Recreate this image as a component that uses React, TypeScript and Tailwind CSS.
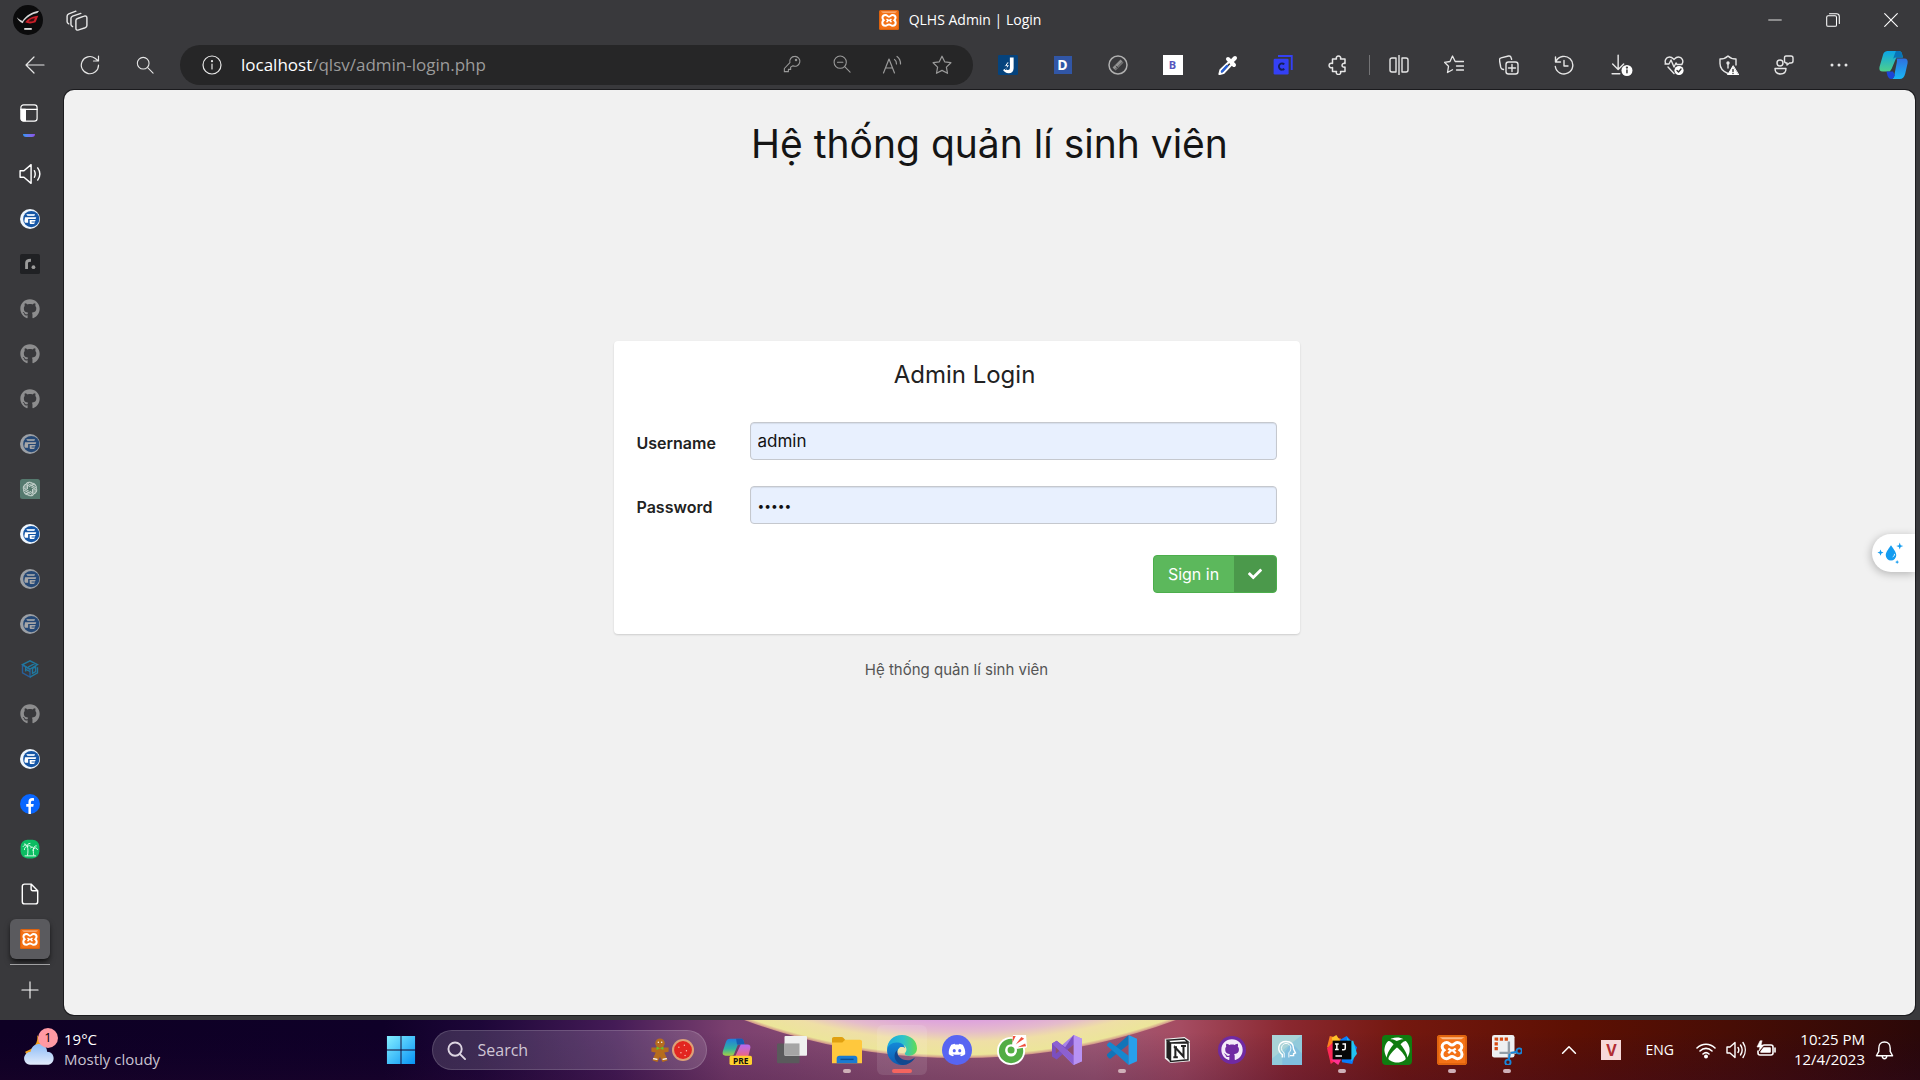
import React from 'react';
import type { ReactNode } from 'react';
import { FaGithub, FaDiscord, FaXbox, FaCheck } from 'react-icons/fa';

type IconProps = { className?: string };

function Line({ children, className = 'size-5', width = 1.2 }: { children: ReactNode; className?: string; width?: number }) {
  return (
    <svg viewBox="0 0 20 20" className={className} fill="none" stroke="currentColor" strokeWidth={width} strokeLinecap="round" strokeLinejoin="round" aria-hidden="true">
      {children}
    </svg>
  );
}

function Art({ children, className = 'size-5', box = '0 0 32 32' }: { children: ReactNode; className?: string; box?: string }) {
  return (
    <svg viewBox={box} className={className} aria-hidden="true">
      {children}
    </svg>
  );
}

function Xampp({ className = 'size-5' }: IconProps) {
  return (
    <Art className={className}>
      <rect width="32" height="32" rx="3" fill="#f47216" />
      <rect x="1" y="1" width="30" height="30" rx="2" fill="none" stroke="#d9600d" strokeWidth="1.5" />
      <path d="M3 2.5h26l-3 2H6z" fill="#fbb887" />
      <path
        d="M10.500 8c-3 0-5 2-5 4.500 0 1.700 1 2.800 2 3.700-1.200 1-2.200 2.300-2.200 4.300 0 2.700 2.200 4.700 5 4.700 2.700 0 3.200-2.200 5.700-2.200s3 2.200 5.700 2.200c2.800 0 5-2 5-4.700 0-2-1-3.300-2.200-4.300 1-.9 2-2 2-3.700C26.500 10 24.500 8 21.500 8c-2.700 0-3 2.700-5.500 2.700S13.200 8 10.500 8z"
        fill="none"
        stroke="#fff"
        strokeWidth="3.200"
      />
      <path d="M12 14.500l3 2-3 3M20 14.500l-3 2 3 3M14 16.500h4" stroke="#fff" strokeWidth="2.400" fill="none" />
    </Art>
  );
}

function Portal({ className = 'size-5' }: IconProps) {
  return (
    <Art className={className}>
      <circle cx="16" cy="16" r="16" fill="#eef5fc" />
      <circle cx="18" cy="16" r="13" fill="#1556a5" />
      <path d="M10 8h14l-1 3H12z" fill="#d5e4f5" />
      <path d="M8 13h18l-1 3H13v6h-3c-2 0-3-1-3-3z" fill="#fff" />
      <path d="M15.500 17.500H25l-1 2.500h-5.500v1.500H24L22.500 24H17c-1 0-1.500-.6-1.500-1.500z" fill="#fff" />
    </Art>
  );
}

function ChatKnot() {
  return (
    <Art>
      <path d="M4 0h24a4 4 0 0 1 4 4v28H4a4 4 0 0 1-4-4V4a4 4 0 0 1 4-4z" fill="#55796e" />
      <g fill="none" stroke="#c3d0cb" strokeWidth="1.600">
        {[0, 60, 120, 180, 240, 300].map((a) => (
          <path key={a} transform={`rotate(${a} 16 16)`} d="M12 16V9.500a4.600 4.600 0 0 1 8.300-2.400M12 11l6.500-3.700a4.600 4.600 0 0 1 6.500 3" />
        ))}
      </g>
    </Art>
  );
}

function Hexes() {
  return (
    <Art>
      <g fill="none" stroke="#20789f" strokeWidth="2.200">
        <path d="M4 10v12l12 7V17z" stroke="#285f9a" />
        <path d="M28 13v9l-12 7" />
        <path d="M28 9 16 3 4 9l12 7zM9 12v8m4-7 11-6M10 17l6 3m4-5v8l5-3v-7z" />
      </g>
    </Art>
  );
}

function Facebook() {
  return (
    <Art>
      <circle cx="16" cy="16" r="16" fill="#0866ff" />
      <path d="M13.500 32V20.500H10V16h3.500v-2.700c0-5 2.200-7 6.300-7 .8 0 2 .1 2.600.3v4h-2c-2.300 0-2.900.9-2.900 3V16h4.500l-.8 4.500h-3.700V32z" fill="#fff" />
    </Art>
  );
}

function Palms() {
  return (
    <Art>
      <rect x="1" y="1" width="30" height="30" rx="11" fill="#0cbc62" />
      <g fill="none" stroke="#e6fff1" strokeWidth="1.500" strokeLinecap="round">
        <path d="M12 26c1-5 1-9 0-14M22 26c-1-4-1-8 0-11M8 27h17" />
        <path d="M12 12c-2-3-5-3-7 0m7 0c-3 0-5 2-5 5m5-5c2-2 5-2 6 1m-6-1c-1-3 1-5 4-5m-4 5c-1-3-3-4-5-4M22 15c-1-2-3-3-5-1m5 1c-1 1-2 3-1 4m1-4c2-2 5-1 6 2m-6-2c0-3 2-4 4-4" />
      </g>
    </Art>
  );
}

function Roadmap() {
  return (
    <Art>
      <rect width="32" height="32" rx="3" fill="#202124" />
      <path d="M10.500 24V14.500c0-3 2-4.500 7-4.500" fill="none" stroke="#9b9b9b" strokeWidth="4.500" />
      <circle cx="21.500" cy="21" r="3" fill="#9b9b9b" />
    </Art>
  );
}

function Rog() {
  return (
    <Art className="size-[30px]">
      <circle cx="16" cy="16" r="16" fill="#0b0b0c" />
      <path d="M4 13c2 2 4 3 6 4 4-6 10-10 18-11-1 1-1.500 1.500-2 2.500-6 1-10 4-14.500 8.500l-1 2.500c-3-1-5.500-4-6.500-6.500z" fill="#d8d8d8" />
      <path d="M13 18.500c3.500-4.500 7.500-6.500 14-7l-3 7c-4 1.500-8 1.500-11 0z" fill="#c81f29" />
      <path d="M16.500 17.500c2-2.500 4-3.500 7-3.500l-1.500 3c-2 .8-4 .8-5.500.5z" fill="#3a0d10" />
      <path d="M12 25.500h8" stroke="#ddd" strokeWidth="2" />
    </Art>
  );
}

function ToolButton({ label, children }: { label: string; children: ReactNode }) {
  return (
    <button type="button" aria-label={label} className="flex h-10 w-[55px] shrink-0 items-center justify-center pl-0.5 text-[#e6e6e6]">
      {children}
    </button>
  );
}

function TitleBar() {
  return (
    <div className="grid h-10 grid-cols-[1fr_auto_1fr] items-center">
      <div className="flex items-center gap-[23px] pl-[13px]">
        <button type="button" aria-label="Profile"><Rog /></button>
        <button type="button" aria-label="Workspaces" className="text-[#e6e6e6]">
          <Line className="size-[22px]" width={1.3}>
            <path d="M2.500 13.500C1.500 13 1 12.500 1 11.500V6.500C1 5.500 1.500 5 2.500 4.500L9 2M6 16c-1-.5-1.500-1-1.500-2V8.500c0-1 .5-1.500 1.500-2L13.500 4" />
            <path d="M10.500 8.600 16.500 6.500c1.300-.5 2.500 0 2.500 1.500v7c0 1-.5 1.600-1.500 2l-6 2c-1.500.5-2.500 0-2.500-1.500v-7c0-1 .5-1.600 1.500-1.900z" />
          </Line>
        </button>
      </div>
      <div className="flex items-center gap-2.5 text-white">
        <Xampp />
        <span className="text-sm">QLHS Admin | Login</span>
      </div>
      <div className="flex justify-end text-white">
        <button type="button" aria-label="Minimize" className="flex h-10 w-[58px] items-center justify-center"><Line className="size-3.5"><path d="M1 10h18" /></Line></button>
        <button type="button" aria-label="Restore" className="flex h-10 w-[58px] items-center justify-center"><Line className="size-3.5" width={1.5}><rect x="1" y="4" width="14" height="15" rx="2" /><path d="M5 1h10c3 0 4 1.500 4 4v10" /></Line></button>
        <button type="button" aria-label="Close" className="flex h-10 w-[58px] items-center justify-center"><Line className="size-3.5" width={1.600}><path d="m1 1 18 18M19 1 1 19" /></Line></button>
      </div>
    </div>
  );
}

function AddressBar() {
  return (
    <div className="mr-1.5 ml-[9px] flex h-10 min-w-0 flex-1 items-center rounded-full bg-[#262627] pr-1.5">
      <button type="button" aria-label="Site information" className="ml-[22px] text-[#e6e6e6]">
        <Line><circle cx="10" cy="10" r="9" /><path d="M10 9v5" /><circle cx="10" cy="6.200" r=".5" fill="currentColor" /></Line>
      </button>
      <a href="#login" className="ml-[19px] min-w-0 flex-1 truncate text-[17px] text-[#9b9b9b]">
        <span className="text-white">localhost</span>/qlsv/admin-login.php
      </a>
      <div className="flex text-[#9a9a9a]">
        <button type="button" aria-label="Passwords" className="flex w-[50px] justify-center">
          <Line className="size-[18px]"><path d="M13 1.500a5.500 5.500 0 0 0-5.300 7L1.500 15v3.500H6V16h2.500v-2.500L11 12a5.500 5.500 0 1 0 2-10.500z" /><circle cx="14.500" cy="5.500" r=".8" /></Line>
        </button>
        <button type="button" aria-label="Zoom out" className="flex w-[50px] justify-center">
          <Line className="size-[18px]"><circle cx="8" cy="8" r="6.800" /><path d="m13 13 6 6M5 8h6" /></Line>
        </button>
        <button type="button" aria-label="Read aloud" className="flex w-[50px] justify-center">
          <Line><path d="m1.500 18 5.500-14 5.500 14M3.500 13h7M12.500 4.500c1.500 1 2 2.500 2 4.500M15 1.500c2.500 1.800 3.500 4.500 3.500 7.500" /></Line>
        </button>
        <button type="button" aria-label="Add to favorites" className="flex w-[50px] justify-center">
          <Line><path d="m10 1.200 2.700 5.600 6.200.9-4.500 4.400 1.100 6.200L10 15.400l-5.500 2.900 1.100-6.200L1.100 7.700l6.200-.9z" /></Line>
        </button>
      </div>
    </div>
  );
}

function Toolbar() {
  return (
    <div className="flex h-[50px] items-center pl-1.5">
      <ToolButton label="Back"><Line><path d="M19 10H1.500M9 2 1 10l8 8" /></Line></ToolButton>
      <ToolButton label="Refresh"><Line><path d="M18.500 10A8.600 8.600 0 1 1 15 3.200L18.200 5.800M18.500 1v5h-5" /></Line></ToolButton>
      <ToolButton label="Search"><Line className="size-[18px]"><circle cx="8" cy="8" r="6.500" /><path d="m13 13 6 6" /></Line></ToolButton>
      <AddressBar />
      <ToolButton label="J extension">
        <Art><rect width="32" height="32" rx="2" fill="#05437d" /><path d="M19 4h6v17c0 5-3 8-8 8-4 0-7-2-9-5l5-3c1 2 2 3 3 3 2 0 3-1 3-4z" fill="#fff" /><path d="m15 11-5 7h4l-2 6 7-8h-4l3-5z" fill="#fff" stroke="#05437d" strokeWidth="1.500" /></Art>
      </ToolButton>
      <ToolButton label="D extension">
        <span className="flex size-[18px] items-center justify-center bg-[#3156a6] text-sm font-bold text-white">D</span>
      </ToolButton>
      <ToolButton label="Compass extension">
        <Line className="size-5 text-[#b0b0b0]" width={1.500}><circle cx="10" cy="10" r="9" /><path d="m6 14 8-8" strokeWidth="4" strokeLinecap="butt" stroke="#929292" /><path d="m7 14.500 8-8M8 11l2 2" strokeWidth=".8" stroke="#39393b" /></Line>
      </ToolButton>
      <ToolButton label="B extension">
        <span className="flex size-5 items-center justify-center bg-white text-[11px] font-bold text-[#5555bd]">B</span>
      </ToolButton>
      <ToolButton label="Color picker">
        <Line className="size-5"><path d="m12 6-9.500 9-1 4 4-1 9-9.500" stroke="#fff" strokeWidth="2.200" /><path d="m9 11-5 5.500" stroke="#2760d5" strokeWidth="2.500" /><path d="m10 4 6 6M15 5l2-2" stroke="#fff" strokeWidth="4" /></Line>
      </ToolButton>
      <ToolButton label="C extension">
        <Art><path d="M8 1.500h22V24" fill="none" stroke="#3440f5" strokeWidth="3" /><rect x="1" y="6" width="24" height="25" rx="2" fill="#3440f5" /><path d="M18 15a5 5 0 1 0 0 7" fill="none" stroke="#15205c" strokeWidth="3" /></Art>
      </ToolButton>
      <ToolButton label="Extensions">
        <Line width={1.500}><path d="M6 4h2.500a2.200 2.200 0 1 1 4 0H17v4.500a2 2 0 1 0 0 3.500v4.500h-4.500a2.200 2.200 0 1 1-4 0H4.500v-4a2.300 2.300 0 1 1 0-4V4z" /></Line>
      </ToolButton>
      <div className="flex w-1.5 shrink-0 justify-end"><span className="h-5 w-px bg-[#737375]" /></div>
      <ToolButton label="Split screen"><Line width={1.400}><path d="M7 3H3a2 2 0 0 0-2 2v10c0 1 1 2 2 2h4zm6 0h4a2 2 0 0 1 2 2v10c0 1-1 2-2 2h-4zM10 .5v19" /></Line></ToolButton>
      <ToolButton label="Favorites"><Line width={1.300}><path d="M13 6.500h-1.800L8.500 1 6 6.500l-5.500.8 4 4-1 6.200 5-2.800M13 6.500h6.500M12.500 11h7M12.500 15h7" /></Line></ToolButton>
      <ToolButton label="Collections"><Line width={1.400}><rect x="7" y="7" width="12" height="12" rx="2.500" /><path d="M13 9.500v7M9.500 13h7M4.500 14.500 3 14c-1-.5-1-1-1.300-2L.5 5.500c-.2-1.500.3-2.300 1.600-2.600L9.500 1c1.500-.3 2.300.3 2.600 1.500l.5 1.800" /></Line></ToolButton>
      <ToolButton label="History"><Line width={1.400}><path d="M1.500 2v5h5M2 6.500a8.800 8.800 0 1 1-.7 5M10 5.500V11h4" /></Line></ToolButton>
      <ToolButton label="Downloads">
        <Line className="ml-1.5 size-[22px]" width={1.300}><path d="M6.500 1v13M1.500 9l5 5 5-5M1 18h7" /><circle cx="14.500" cy="15" r="5" fill="#fff" stroke="none" /><path d="M14.500 14.500V17" stroke="#333" /><circle cx="14.500" cy="12.300" r=".4" stroke="#333" /></Line>
      </ToolButton>
      <ToolButton label="Browser essentials">
        <Line width={1.400}><path d="M2 9c-2-3 0-7 3.500-7C8 2 9 3.500 10 4.500 11 3.500 12 2 14.500 2 18 2 20 6 18 9M1 9h4l2-4 3 7 2-4 1 1.500h5M4 12l6 6.500" /><circle cx="15" cy="15.500" r="4.600" fill="#fff" stroke="none" /><path d="m13 15.500 1.500 1.500 2.500-3" stroke="#333" /></Line>
      </ToolButton>
      <ToolButton label="Security">
        <Line width={1.400}><path d="M9 18.500c-5-2-8-5-8-10V4c3.500 0 6-1 8-3 2 2 4.500 3 8 3v6M9 8v5" /><circle cx="9" cy="8" r="1" fill="#fff" /><path d="m14 11-5.500 9h11z" fill="#fff" stroke="#fff" strokeWidth="1" /><path d="M14 14.500v2M14 18.500v.1" stroke="#333" /></Line>
      </ToolButton>
      <ToolButton label="Feedback">
        <Line width={1.400}><circle cx="6" cy="8" r="3" /><path d="M1 13.500h11c0 3.500-2 5.500-5.500 5.500S1 17 1 13.500zM12 1h5c1.500 0 2 .8 2 2v3c0 1.300-.7 2-2 2h-1.500L13 10V8h-.5C11 8 10.500 7 10.500 6V3c0-1.300.5-2 1.500-2z" /></Line>
      </ToolButton>
      <ToolButton label="Settings and more"><Line><g fill="currentColor" stroke="none"><circle cx="3" cy="10" r="1.500" /><circle cx="10" cy="10" r="1.500" /><circle cx="17" cy="10" r="1.500" /></g></Line></ToolButton>
      <ToolButton label="Copilot">
        <Art className="size-[30px]">
          <defs>
            <linearGradient id="cpA" x1="0" y1="0" x2="0" y2="1"><stop stopColor="#0aa4e8" /><stop offset="1" stopColor="#4fd08a" /></linearGradient>
            <linearGradient id="cpB" x1="0" y1="0" x2="0" y2="1"><stop stopColor="#2f6fe0" /><stop offset="1" stopColor="#19b7f4" /></linearGradient>
          </defs>
          <path d="M14 1h7c2 0 3 1 3.500 3l1 4h-7l-5 12-2 3H4c-3 0-4-2-3.500-5L4 6c1-4 3-5 6-5z" fill="url(#cpA)" />
          <path d="M18 1h3c2 0 3 1 3.500 3l1 4H18c-2 0-3 1-3.500 3z" fill="#0873b8" />
          <path d="M19 9h9c3 0 4 2 3.500 5L29 25c-1 4-3 6-6 6h-9c2 0 3-2 3.500-5L20 13c.3-1.500.5-4-1-4z" fill="url(#cpB)" transform="translate(-1)" />
          <path d="M8 23h7l2 4c-1 2-2 4-4 4-3 0-4-3-5-8z" fill="#1b45d6" />
        </Art>
      </ToolButton>
    </div>
  );
}

const tabs: { label: string; icon: ReactNode; dim?: boolean }[] = [
  { label: 'Playing audio', icon: <Line width={1.300} className="size-[22px] text-white"><path d="M1 7h3.500L11 1.500v17L4.500 13H1zM14 7c1 2 1 4 0 6M17 4.500c2.500 3.500 2.500 7.500 0 11" /></Line> },
  { label: 'Portal', icon: <Portal /> },
  { label: 'Roadmap', icon: <Roadmap /> },
  { label: 'GitHub', icon: <FaGithub className="size-5 text-[#8d8d8e]" /> },
  { label: 'GitHub pulls', icon: <FaGithub className="size-5 text-[#8d8d8e]" /> },
  { label: 'GitHub issues', icon: <FaGithub className="size-5 text-[#8d8d8e]" /> },
  { label: 'Portal courses', icon: <Portal />, dim: true },
  { label: 'Chat', icon: <ChatKnot /> },
  { label: 'Portal schedule', icon: <Portal /> },
  { label: 'Portal grades', icon: <Portal />, dim: true },
  { label: 'Portal news', icon: <Portal />, dim: true },
  { label: 'Blocks', icon: <Hexes /> },
  { label: 'GitHub repository', icon: <FaGithub className="size-5 text-[#8d8d8e]" /> },
  { label: 'Portal home', icon: <Portal /> },
  { label: 'Facebook', icon: <Facebook /> },
  { label: 'Palms', icon: <Palms /> },
  { label: 'Document', icon: <Line width={1.300} className="size-[22px] text-white"><path d="M5 1h6l6 6v10c0 1.200-.8 2-2 2H5c-1.200 0-2-.8-2-2V3c0-1.200.8-2 2-2zM11 1v4.500C11 6.500 11.500 7 12.500 7H17" /></Line> },
];

function SideTabs() {
  return (
    <nav aria-label="Tabs" className="flex w-16 shrink-0 flex-col items-center pr-1">
      <div className="flex h-[61px] flex-col items-center pt-3.5 pr-0.5">
        <button type="button" aria-label="Tab actions" className="text-white">
          <Line className="size-[18px]" width={1.300}><rect x="1" y="1" width="18" height="18" rx="3" /><path d="M1 6h18" /><path d="M1.500 6H6v12.500H3.500c-1.200 0-2-.8-2-2z" fill="currentColor" /></Line>
        </button>
        <span className="mt-3 h-[3px] w-3 rounded-b-full bg-linear-to-r from-[#2196f3] to-[#8a4fe8]" />
      </div>
      {tabs.map((t) => (
        <button key={t.label} type="button" aria-label={t.label} className="flex h-[45px] w-10 shrink-0 items-center justify-center">
          <span className={t.dim ? 'opacity-55' : ''}>{t.icon}</span>
        </button>
      ))}
      <button type="button" aria-label="QLHS Admin | Login" className="mt-[3px] flex size-10 shrink-0 items-center justify-center rounded-md bg-[#5a5a5e] shadow-md shadow-black/60">
        <Xampp />
      </button>
      <span className="mt-[5px] h-px w-10 bg-[#a0a0a2]" />
      <button type="button" aria-label="New tab" className="mt-4 text-white"><Line className="size-[18px]"><path d="M10 1v18M1 10h18" /></Line></button>
    </nav>
  );
}

function Field({ id, label, type, value, size }: { id: string; label: string; type: string; value: string; size: string }) {
  return (
    <div className="flex items-center">
      <label htmlFor={id} className="w-[113px] shrink-0 pt-1 text-base font-semibold text-[#222]">{label}</label>
      <input
        id={id}
        type={type}
        defaultValue={value}
        className={`h-[38px] min-w-0 flex-1 rounded-sm border border-[#c5c8ce] bg-[#e8f0fe] px-[7px] text-[#111] shadow-[inset_0_1px_1px_rgba(0,0,0,0.08)] outline-none ${size}`}
      />
    </div>
  );
}

function LoginPage() {
  return (
    <main id="login" className="relative mr-[5px] mb-[5px] min-w-0 flex-1 rounded-[10px] bg-[#f1f1f1] pt-[26px] font-[Inter,sans-serif] shadow-[0_0_0_1px_#1b1b1e]">
      <h1 className="text-center text-[39px] leading-[56px] text-[#151515]">Hệ thống quản lí sinh viên</h1>
      <div className="mt-[169px] flex flex-col items-center pr-[66px]">
        <form className="w-full max-w-[686px] rounded-sm bg-white px-[23px] pt-4 pb-[41px] shadow-[0_1px_2px_rgba(0,0,0,0.15)]" onSubmit={(e) => e.preventDefault()}>
          <h2 className="pl-4 text-center text-2xl leading-9 text-[#222]">Admin Login</h2>
          <div className="mt-[29px] flex flex-col gap-[26px]">
            <Field id="username" label="Username" type="text" value="admin" size="text-[17px]" />
            <Field id="password" label="Password" type="password" value="admin" size="text-xs" />
          </div>
          <div className="mt-[31px] flex justify-end">
            <button type="submit" className="flex h-[38px] items-stretch overflow-hidden rounded-sm border border-[#4cae4c] bg-[#5cb85c] text-base text-white">
              <span className="flex w-20 items-center justify-center">Sign in</span>
              <span className="flex w-[42px] items-center justify-center bg-[#4b994b]"><FaCheck className="size-3.5" /></span>
            </button>
          </div>
        </form>
        <p className="mt-[25px] text-[15px] leading-[22px] text-[#555]">Hệ thống quản lí sinh viên</p>
      </div>
      <button type="button" aria-label="Assistant" className="absolute top-[444px] right-0 flex h-[38px] w-[43px] items-center rounded-l-full bg-white pl-[5px] shadow-[-1px_2px_8px_rgba(0,0,0,0.25)]">
        <Art className="size-7">
          <g fill="#149cf0">
            <path d="M16 7c4 6 6 8 6 11.500a6 6 0 0 1-12 0C10 15 12 13 16 7z" />
            <path d="m26 4 1 3 3 1-3 1-1 3-1-3-3-1 3-1zM4 12l1 2.500 2.500 1L5 16.500 4 19l-1-2.500-2.500-1 2.500-1zM23 24l.7 1.600 1.600.7-1.600.7L23 28.600l-.7-1.600-1.600-.7 1.600-.7z" />
          </g>
          <path d="M20 17c0 2-1 3-2 3.500" stroke="#fff" fill="none" />
        </Art>
      </button>
    </main>
  );
}

function Wallpaper() {
  return (
    <svg className="absolute inset-0 size-full" viewBox="0 0 1920 60" preserveAspectRatio="none" aria-hidden="true">
      <defs>
        <linearGradient id="sky" x1="0" x2="1">
          <stop offset="0" stopColor="#0e0024" /><stop offset=".2" stopColor="#0f0028" /><stop offset=".25" stopColor="#1d0638" />
          <stop offset=".32" stopColor="#441b56" /><stop offset=".38" stopColor="#7b406f" /><stop offset=".48" stopColor="#945676" />
          <stop offset=".57" stopColor="#a05a76" /><stop offset=".615" stopColor="#a54c62" /><stop offset=".67" stopColor="#8a2830" />
          <stop offset=".73" stopColor="#74180f" /><stop offset=".82" stopColor="#5d1003" /><stop offset=".9" stopColor="#480d05" /><stop offset="1" stopColor="#2b0808" />
        </linearGradient>
        <linearGradient id="fade" x1="0" x2="0" y1="0" y2="1"><stop offset=".2" stopColor="#150030" stopOpacity="0" /><stop offset="1" stopColor="#2a0830" stopOpacity=".25" /></linearGradient>
        <radialGradient id="planet" gradientUnits="userSpaceOnUse" cx="0" cy="0" r="1" gradientTransform="translate(960 -290) scale(462 328)">
          <stop offset=".88" stopColor="#dd9fe0" /><stop offset=".92" stopColor="#e5bccb" /><stop offset=".95" stopColor="#efdfa6" /><stop offset=".99" stopColor="#ece59a" /><stop offset="1" stopColor="#cf9188" />
        </radialGradient>
      </defs>
      <rect width="1920" height="60" fill="url(#sky)" />
      <rect width="1920" height="60" fill="url(#fade)" />
      <ellipse cx="960" cy="-290" rx="462" ry="328" fill="url(#planet)" />
    </svg>
  );
}

const apps: { label: string; icon: ReactNode; running?: boolean; active?: boolean }[] = [
  {
    label: 'Copilot preview',
    icon: (
      <Art className="size-[30px]">
        <defs>
          <linearGradient id="prA" x1="0" y1="0" x2="0" y2="1"><stop stopColor="#217ce0" /><stop offset=".6" stopColor="#31b3a0" /><stop offset="1" stopColor="#a6cf45" /></linearGradient>
          <linearGradient id="prB" x1="0" y1="0" x2="0" y2="1"><stop stopColor="#b26af5" /><stop offset="1" stopColor="#f0657d" /></linearGradient>
        </defs>
        <path d="M9 4h11c3 0 3 2 4 6h-7l-4 10c-.5 2-2 2-3 2H4c-3 0-4-2-3-5L4 8c1-3 2-4 5-4z" fill="url(#prA)" />
        <path d="M15 4h5c3 0 3 2 4 6h-8z" fill="#175bb4" />
        <path d="M20 10h7c3 0 4 2 3 5l-2 8H14z" fill="url(#prB)" />
        <rect x="8" y="22" width="24" height="10" rx="2" fill="#ffd02e" />
        <text x="20" y="30.500" textAnchor="middle" fontSize="9" fontWeight="700" fontFamily="Noto Sans, sans-serif" fill="#111">PRE</text>
      </Art>
    ),
  },
  {
    label: 'Task view',
    icon: <Art className="size-[30px]"><rect x="0" y="9" width="24" height="21" rx="1" fill="#5a5a5c" /><rect x="8" y="1" width="24" height="21" rx="1" fill="#f0f0f0" /><path d="M8 9h16v13H8z" fill="#a5a5a5" /></Art>,
  },
  {
    label: 'File Explorer', running: true,
    icon: <Art className="size-[30px]"><path d="M0 4c0-1 1-2 2-2h8c2 0 3 2 4 3v5H0z" fill="#e0a010" /><path d="M0 8h11l3-3h16c1 0 2 1 2 2v23H0z" fill="#ffc83d" /><path d="M5 30v-5c0-2 1-3 3-3h16c2 0 3 1 3 3v5z" fill="#1a7bd1" /><path d="M9 26h14" stroke="#0c4d92" strokeWidth="1.500" /></Art>,
  },
  {
    label: 'Microsoft Edge', running: true, active: true,
    icon: (
      <Art className="size-[30px]">
        <defs>
          <linearGradient id="edA" x1="0" x2="1"><stop stopColor="#1ba8e0" /><stop offset=".55" stopColor="#2fc3c9" /><stop offset="1" stopColor="#62dc52" /></linearGradient>
          <linearGradient id="edB" x1="0" y1="0" x2="0" y2="1"><stop stopColor="#1489d8" /><stop offset="1" stopColor="#0c5bb0" /></linearGradient>
        </defs>
        <path d="M0 16C0 6 7 0 16 0c10 0 16 7 16 14 0 5-4 8-8 8-5 0-6-2-4-4 2-3 0-8-5-8C8 9 2 11 0 16z" fill="url(#edA)" />
        <path d="M0 16c1-5 5-8 10-8 5 0 9 2 9 6-4-3-8 0-8 5 0 6 5 12 11 12-11 4-22-4-22-15z" fill="url(#edB)" />
        <path d="M11 16c-1 6 4 11 11 11 3 0 5-1 8-3-3 5-8 8-13 8-8-1-12-11-6-16z" fill="#12488f" />
        <circle cx="16" cy="16" r="3.300" fill="#f0e6b0" />
      </Art>
    ),
  },
  { label: 'Discord', icon: <span className="flex size-[30px] items-center justify-center rounded-full bg-[#5865f2]"><FaDiscord className="size-[18px] text-white" /></span> },
  {
    label: 'Coc Coc',
    icon: (
      <Art className="size-[30px]">
        <circle cx="15" cy="17" r="15" fill="#fff" />
        <path d="M17 0h14l1 13-8 3z" fill="#fff" />
        <circle cx="15" cy="17" r="9.500" fill="none" stroke="#52ad45" strokeWidth="7" />
        <circle cx="15" cy="16" r="5" fill="#54b045" stroke="#fff" strokeWidth="2.500" />
        <path d="m16 12 1-12h13l1 13-10 2z" fill="#fff" />
        <path d="m16.500 8 .5-7h3zM20 10l6-8 3 2zM22 13l8-4 1 3z" fill="#f0523f" />
      </Art>
    ),
  },
  {
    label: 'Visual Studio',
    icon: <Art className="size-[30px]"><path d="m23 0 9 4v24l-9 4L6 15z" fill="#a883e8" /><path d="M23 0v32l9-4V4z" fill="#b892f4" /><path d="m0 9 5-3 9 7 9-13v10L5 26l-5-3z" fill="#7b4fc0" /><path d="M4 12v8l5-4z" fill="#8e506f" /><path d="m23 10-7 6 7 6z" fill="#8d4c70" /><path d="m5 6 18 16v10L0 9z" fill="#8c60d2" /></Art>,
  },
  {
    label: 'Visual Studio Code', running: true,
    icon: <Art className="size-[30px]"><path d="M23 0v10L4 25c-1 .6-2 0-4-3 0-1 0-1.500.7-2z" fill="#1274b8" /><path d="M23 32V22L4 8c-1-.7-2-.5-4 2 0 1 0 1.500.7 2z" fill="#1687cf" /><path d="m23 0 9 4v24l-9 4z" fill="#27a0ec" /></Art>,
  },
  {
    label: 'Notion',
    icon: <Art className="size-[26px]"><path d="M2 3 25 1l6 4v24L8 31l-6-5z" fill="#fff" stroke="#eee" strokeWidth="2" /><path d="m3 4 5 4v22l-5-5z" fill="#222" /><path d="M4 4 25 2.500 29.500 6 8 7.500zM8 7.500h21.500V28L8 30z" fill="#fff" stroke="#222" strokeWidth="1.800" /><path d="M14 25V13l10 11V11M12 12.500h4M11.500 25H17M21 11h6" stroke="#222" strokeWidth="2.500" fill="none" /></Art>,
  },
  { label: 'GitHub Desktop', icon: <span className="flex size-7 items-center justify-center rounded-full bg-[#702aa2]"><FaGithub className="size-[22px] text-[#f3eaf8]" /></span> },
  {
    label: 'Assistant',
    icon: <Art className="size-[30px]"><rect width="32" height="32" fill="#91cadb" /><path d="M0 0h32L0 25z" fill="#b9d9d3" opacity=".6" /><path d="m11 22 10-14 11 12v12H11z" fill="#75b6e0" opacity=".6" /><g fill="none" stroke="#fff" strokeWidth="1.500"><path d="M11 24v-3C5 17 6 7 15 7c6 0 8 4 8 8l2 4-2 1v2h-4" /><path d="M13 24v-5c-5-3-3-10 2-10s7 6 3 10v5" strokeWidth="1" /></g></Art>,
  },
  {
    label: 'IntelliJ IDEA', running: true,
    icon: <Art className="size-[30px]"><path d="m3 1 12 3-3 13L0 13z" fill="#fc801d" /><path d="m0 14 9-9 5 19L4 31z" fill="#fe2857" /><path d="m14 5 7-4 11 12-5 18-11-2z" fill="#087cfa" /><path d="m21 2 3 4 4 0 4 14-6 8z" fill="#22c3f0" /><path d="m4 26 12-2-4 8z" fill="#ff3192" /><path d="m5 3 5-3 4 6-7 5z" fill="#ffc229" /><rect x="6" y="6" width="20" height="20" fill="#070707" /><path d="M8.500 9.500h4m-2 0v6m-2 0h4m4-6h3v4.500c0 1-.6 1.600-1.600 1.600H16M9 22.500h7" stroke="#fff" strokeWidth="1.600" fill="none" /></Art>,
  },
  { label: 'Xbox', icon: <span className="flex size-[30px] items-center justify-center rounded-sm bg-[#107c10]"><FaXbox className="size-[26px] text-white" /></span> },
  { label: 'XAMPP', running: true, icon: <Xampp className="size-[30px]" /> },
  {
    label: 'Snipping Tool', running: true,
    icon: <Art className="size-[30px]"><rect width="24" height="24" rx="2.500" fill="#eef0f2" /><path d="M17 4.500H4.500V17" fill="none" stroke="#d84a12" strokeWidth="3.500" strokeDasharray="3.500 1.700" /><path d="M18 7v18M8 19h18" stroke="#929da7" strokeWidth="2.500" /><g fill="none" stroke="#1787dc" strokeWidth="2"><circle cx="29" cy="17" r="2.800" /><circle cx="17" cy="29" r="2.800" /><path d="m20 19 6-1m-7 2-1 6" /></g></Art>,
  },
];

function Taskbar() {
  return (
    <footer className="relative h-[60px] shrink-0 overflow-hidden bg-[#0e0024] text-white">
      <Wallpaper />
      <div className="relative flex h-full items-center">
        <button type="button" className="flex flex-1 items-center gap-1.5 pb-0.5 pl-[23px] text-left">
          <span className="relative">
            <Art className="size-[35px]">
              <defs><linearGradient id="cloud" x1="0" y1="0" x2="0" y2="1"><stop stopColor="#8dbcf7" /><stop offset="1" stopColor="#e3ecfb" /></linearGradient></defs>
              <path d="M13 3c1 6-2 12-11 15 1 3 4 6 8 6 8-2 10-16 3-21z" fill="#f3a11d" />
              <path d="M8 30c-4 0-7-2-7-6 0-3 3-6 6-6 1-5 4-7 8-7s7 3 7 7c4 0 6 3 6 6s-2 6-6 6z" fill="url(#cloud)" />
            </Art>
            <span className="absolute -top-1 right-0 flex size-5 items-center justify-center rounded-full bg-[#ff99a4] text-[13px] text-black">1</span>
          </span>
          <span className="text-[15px] leading-5"><span className="block">19°C</span><span className="block text-[#c9c3d1]">Mostly cloudy</span></span>
        </button>
        <div className="flex items-center">
          <button type="button" aria-label="Start" className="mr-4">
            <Art className="size-[30px]"><defs><linearGradient id="win" x1="0" y1="0" x2="1" y2="1"><stop stopColor="#85efff" /><stop offset="1" stopColor="#0692f5" /></linearGradient></defs><path d="M1 1h14.500v14.500H1zm15.500 0H31v14.500H16.500zM1 16.500h14.500V31H1zm15.500 0H31V31H16.500z" fill="url(#win)" /></Art>
          </button>
          <label className="flex h-10 w-[275px] items-center rounded-full border border-white/15 bg-white/15 pr-3 pl-3.5">
            <Line className="size-[19px] shrink-0 text-[#ddd5e2]" width={2}><circle cx="8.500" cy="8.500" r="7" /><path d="m14 14 5 5" /></Line>
            <input type="search" aria-label="Search" placeholder="Search" className="ml-3 w-full min-w-0 bg-transparent text-base text-white outline-none placeholder:text-[#d0c6d5]" />
            <Art className="size-6 shrink-0" box="0 0 24 28"><g fill="#b66c1d"><circle cx="12" cy="6" r="5.500" /><path d="M2 11h20v5l-5 1 4 9-6 2-3-6-3 6-6-2 4-9-5-1z" /></g><path d="m8 10 4 2 4-2v4l-4-2-4 2z" fill="#66c42b" /><circle cx="10" cy="5" r=".8" fill="#fff" /><circle cx="14" cy="5" r=".8" fill="#fff" /><path d="m4 24 5 1m6 0 5-1" stroke="#fff" strokeWidth="1.500" /></Art>
            <Art className="size-[22px] shrink-0"><circle cx="16" cy="16" r="16" fill="#dea177" /><circle cx="16" cy="16" r="13" fill="#e22620" /><g fill="#ffc5b4"><circle cx="10" cy="12" r="1" /><circle cx="18" cy="9" r="1" /><circle cx="21" cy="17" r="1" /><circle cx="13" cy="20" r="1" /><circle cx="19" cy="24" r="1" /></g></Art>
          </label>
          <div className="ml-[5px] flex gap-[5px]">
            {apps.map((a) => (
              <button key={a.label} type="button" aria-label={a.label} className={`relative flex size-[50px] items-center justify-center rounded-md ${a.active ? 'bg-white/10' : ''}`}>
                {a.icon}
                {a.running && <span className={`absolute bottom-0.5 h-1 rounded-full ${a.active ? 'w-5 bg-[#f4645f]' : 'w-2 bg-[#cfb0b8]'}`} />}
              </button>
            ))}
          </div>
        </div>
        <div className="flex flex-1 items-center justify-end pr-[26px]">
          <button type="button" aria-label="Hidden icons"><Line className="size-4" width={2}><path d="m2 14 8-8 8 8" /></Line></button>
          <button type="button" aria-label="Vietnamese keyboard" className="ml-6 flex size-5 items-center justify-center bg-[#f6d9d9] text-base font-bold text-[#b12d33]">V</button>
          <button type="button" className="ml-6 text-sm">ENG</button>
          <button type="button" aria-label="Network, sound, battery" className="ml-[22px] flex items-center gap-2.5">
            <Line width={1.600}><path d="M1 8c5-5 13-5 18 0M4 11c3.500-3.500 8.500-3.500 12 0M7 14c2-1.800 4-1.800 6 0" /><circle cx="10" cy="16.500" r="1.200" fill="currentColor" /></Line>
            <Line width={1.400}><path d="M1 7h3l5-4.500v15L4 13H1zM12 7.500c1 1.500 1 3.500 0 5M14.500 5c2 3 2 7 0 10M17 2.500c3 4.500 3 10.500 0 15" /></Line>
            <Line width={1.600}><path d="M8 5h7c1.500 0 2 .7 2 2v6c0 1.500-.5 2-2 2H4c-1.500 0-2-.5-2-2v-2M19 8v4" /><path d="M8 8h6v4H5z" fill="currentColor" /><path d="M4 1 1 7h3l-1 4 5-6H5l1-4z" fill="currentColor" strokeWidth=".6" /></Line>
          </button>
          <button type="button" className="ml-[18px] pb-0.5 text-right text-[15px] leading-5"><span className="block">10:25 PM</span><span className="block">12/4/2023</span></button>
          <button type="button" aria-label="Notifications" className="ml-2.5"><Line className="size-[19px]" width={1.500}><path d="M10 1C6 1 4 4 4 7.500V11l-2.500 4.500h17L16 11V7.500C16 4 14 1 10 1zM7.500 16c.5 3.500 4.500 3.500 5 0" /></Line></button>
        </div>
      </div>
    </footer>
  );
}

export default function App() {
  return (
    <div className="flex min-h-screen flex-col bg-[#39393c] font-['Open_Sans','Noto_Sans',sans-serif]">
      <header>
        <TitleBar />
        <Toolbar />
      </header>
      <div className="flex flex-1">
        <SideTabs />
        <LoginPage />
      </div>
      <Taskbar />
    </div>
  );
}
